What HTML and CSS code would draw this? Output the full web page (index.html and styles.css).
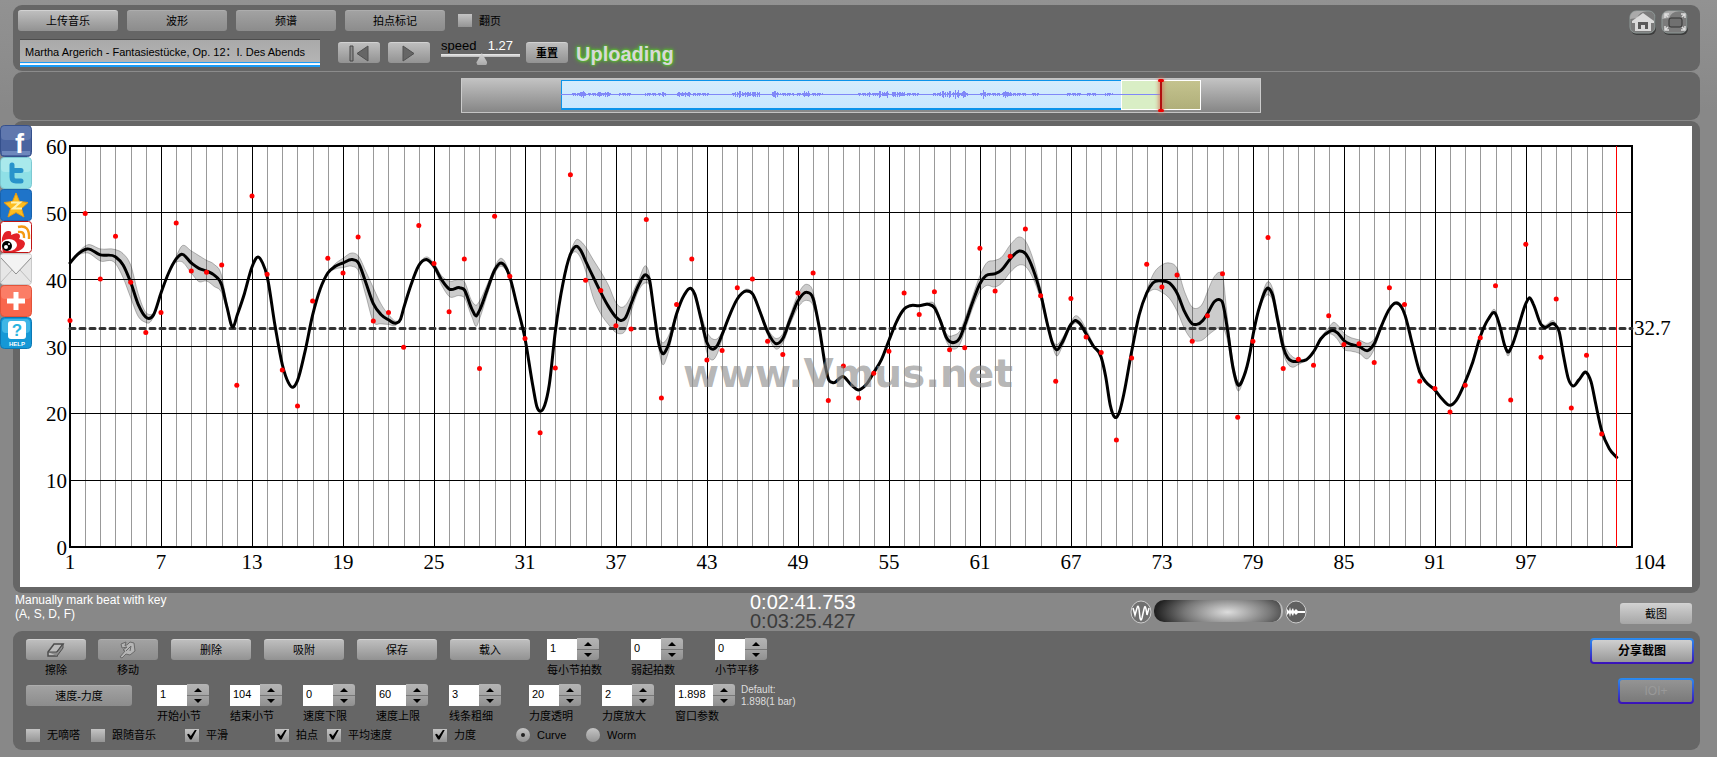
FILE: index.html
```html
<!DOCTYPE html>
<html lang="zh-CN">
	<head>
		<meta charset="utf-8">
		<title>Vmus.net</title>
		<link rel="stylesheet" href="styles.css">
	</head>
	<body>
		<!-- 左侧分享按钮 -->
		<nav class="share">
			<a href="#" aria-label="Facebook">
				<svg viewBox="0 0 32 32">
					<rect x="0.5" y="0.5" width="31" height="31" rx="4" fill="#4a64a0" stroke="#35508c"/>
					<rect x="1" y="1" width="30" height="14" rx="4" fill="#6078ae"/>
					<rect x="2" y="26" width="28" height="4" fill="#6e88bd"/>
					<text x="15" y="28" font-size="27" class="logo">f</text>
				</svg>
			</a>
			<a href="#" aria-label="Twitter">
				<svg viewBox="0 0 32 32">
					<rect x="0.5" y="0.5" width="31" height="31" rx="4" fill="#8fe0e6" stroke="#7cc9d2"/>
					<rect x="1" y="1" width="30" height="14" rx="4" fill="#a9e9ec"/>
					<path d="M12 8V20Q12 24 16 24H21M12 13.500H21" fill="none" stroke="#2893cb" stroke-width="5" stroke-linecap="round"/>
				</svg>
			</a>
			<a href="#" aria-label="QQ空间">
				<svg viewBox="0 0 32 32">
					<rect x="0.500" y="0.500" width="31" height="31" rx="3" fill="#1f74c9" stroke="#1862ad"/>
					<path d="M16 4L19.500 12.500L28 13.500L21.500 19.500L24 28L16 23.500L8 28L10.500 19.500L4 13.500L12.500 12.500Z" fill="#fdbd1f" stroke="#e89a10"/>
					<path d="M11 13.500H20L13 19.500H22" fill="none" stroke="#fff3b0" stroke-width="2"/>
				</svg>
			</a>
			<a href="#" aria-label="新浪微博">
				<svg viewBox="0 0 32 32">
					<rect x="0.500" y="0.500" width="31" height="31" rx="3" fill="#fff" stroke="#c01414"/>
					<path d="M2 17Q4 9 9 10Q12 10 11 14Q19 10 20 15Q20 17 19 18Q25 19 25 23Q24 29 15 31H3Q1 26 2 17Z" fill="#e32228"/>
					<ellipse cx="9" cy="24" rx="8" ry="6" fill="#fff"/>
					<circle cx="7" cy="25" r="5" fill="#000"/>
					<circle cx="6" cy="26" r="2" fill="#fff"/>
					<circle cx="9" cy="23" r="1" fill="#fff"/>
					<path d="M18 6Q30 3 29 18M18 11Q25 10 24 17" fill="none" stroke="#f49a12" stroke-width="2.500"/>
				</svg>
			</a>
			<a href="#" aria-label="邮件">
				<svg viewBox="0 0 32 32">
					<rect x="0.500" y="0.500" width="31" height="31" rx="3" fill="#e6e6e6" stroke="#c9c9c9"/>
					<path d="M1 29L12 17M31 29L20 17" stroke="#bdbdbd" fill="none"/>
					<path d="M1 4L16 21L31 4V2H1Z" fill="#f3f3f3"/>
					<path d="M1 5L16 21L31 5" fill="none" stroke="#8f8f8f"/>
				</svg>
			</a>
			<a href="#" aria-label="更多">
				<svg viewBox="0 0 32 32">
					<rect x="0.500" y="0.500" width="31" height="31" rx="4" fill="#f9664c" stroke="#e2533a"/>
					<rect x="1" y="1" width="30" height="13" rx="4" fill="#fb7d66"/>
					<path d="M16 7V25M7 16H25" stroke="#fff" stroke-width="5"/>
				</svg>
			</a>
			<a href="#" aria-label="帮助">
				<svg viewBox="0 0 32 32">
					<rect x="0.500" y="0.500" width="31" height="31" rx="4" fill="#1598d6" stroke="#0c78b4"/>
					<rect x="2" y="2" width="28" height="14" rx="4" fill="#3fb6e6"/>
					<rect x="8" y="4" width="18" height="18" rx="3" fill="#fff"/>
					<text x="17" y="19" font-size="17" text-anchor="middle" class="logo logo_q">?</text>
					<text x="17" y="29" font-size="6" text-anchor="middle" class="logo">HELP</text>
				</svg>
			</a>
		</nav>

		<!-- 顶部工具栏 -->
		<div class="panel top">
			<div class="top_left">
				<div class="top_row">
					<button type="button" class="btn btn_wide">上传音乐</button>
					<button type="button" class="btn btn_wide btn_off">波形</button>
					<button type="button" class="btn btn_wide btn_off">频谱</button>
					<button type="button" class="btn btn_wide btn_off">拍点标记</button>
					<label class="check"><input type="checkbox">翻页</label>
				</div>
				<div class="top_row player">
					<input type="text" class="song" aria-label="曲目" value="Martha Argerich - Fantasiestücke, Op. 12：I. Des Abends">
					<div class="player_btns">
						<button type="button" class="btn btn_icon" aria-label="回到开头">
							<svg width="24" height="17" viewBox="0 0 24 17"><path d="M3 1H6V16H3Z" fill="#8c8c8c" stroke="#444"/><path d="M21 1V16L10 8.500Z" fill="#666" stroke="#505050"/></svg>
						</button>
						<button type="button" class="btn btn_icon" aria-label="播放">
							<svg width="24" height="17" viewBox="0 0 24 17"><path d="M6 1V16L17 8.500Z" fill="#666" stroke="#505050"/></svg>
						</button>
					</div>
					<div class="speed">
						<div class="speed_hd"><label for="speed">speed</label><output for="speed">1.27</output></div>
						<input type="range" id="speed" min="0" max="100" value="52">
					</div>
					<button type="button" class="btn btn_icon btn_bold">重置</button>
					<span class="uploading">Uploading</span>
				</div>
			</div>
			<div class="top_right">
				<a href="#" aria-label="首页">
					<svg width="28" height="26" viewBox="0 0 28 26">
						<rect x="2" y="3" width="25" height="22" rx="6" fill="#3c3c3c"/>
						<rect x="1" y="1" width="25" height="22" rx="6" fill="#7b7b7b" stroke="#8f9a98"/>
						<path d="M1 9Q1 1 8 1H18Q10 2 8 8Z" fill="#aaa"/>
						<path d="M14 3L25 11V13H22V21H6V13H3V11Z" fill="#dadada"/>
						<path d="M9 19V12H19V19H16V15H12V19Z" fill="#5a5a5a"/>
					</svg>
				</a>
				<a href="#" aria-label="全屏">
					<svg width="28" height="26" viewBox="0 0 28 26">
						<rect x="2" y="3" width="25" height="22" rx="6" fill="#3c3c3c"/>
						<rect x="1" y="1" width="25" height="22" rx="6" fill="#7b7b7b" stroke="#8f9a98"/>
						<path d="M1 9Q1 1 8 1H18Q10 2 8 8Z" fill="#aaa"/>
						<rect x="8" y="8" width="13" height="9" rx="2" fill="#707070" stroke="#333"/>
						<path d="M4 8V4H8M4 4L7 7M20 4H24V8M24 4L21 7M4 16V20H8M4 20L7 17M20 20H24V16M24 20L21 17" fill="none" stroke="#ddd" stroke-width="1.500"/>
					</svg>
				</a>
			</div>
		</div>

		<!-- 缩略波形 -->
		<div class="panel overview">
			<div class="track">
				<div class="track_view"></div>
				<div class="track_sel"></div>
				<svg class="wave" viewBox="0 0 600 32" preserveAspectRatio="none"><path id="wave"/></svg>
				<i class="cursor"></i>
			</div>
		</div>

		<!-- 速度曲线 -->
		<div class="panel chart">
			<svg id="chart" viewBox="0 0 1672 461" role="img" aria-label="速度-力度曲线"></svg>
		</div>

		<div class="status">
			<p class="hint">Manually mark beat with key<br>(A, S, D, F)</p>
			<div class="time"><span>0:02:41.753</span><span class="total">0:03:25.427</span></div>
			<div class="zoom">
				<svg width="22" height="24" viewBox="0 0 22 24"><ellipse cx="11" cy="12" rx="10" ry="11" fill="#707070" stroke="#ccc"/><path d="M3 8L5 15L7 8Q8 4 9 9L10 18Q11 22 12 18L14 9Q15 4 16 9L17 15L19 8" fill="none" stroke="#fff" stroke-width="1.500"/></svg>
				<input type="range" aria-label="缩放">
				<svg width="22" height="24" viewBox="0 0 22 24"><ellipse cx="11" cy="12" rx="10" ry="11" fill="#606060" stroke="#ccc"/><path d="M2 9L4 11L5 7L6 11L8 8L9 11L11 9L13 11L20 11V13L13 13L11 15L9 13L8 16L6 13L5 17L4 13L2 15Z" fill="#fff"/></svg>
			</div>
			<button type="button" class="btn btn_shot">截图</button>
		</div>

		<!-- 底部设置 -->
		<div class="panel bottom">
			<div class="settings">
				<div class="row">
					<div class="tools">
						<div class="tool">
							<button type="button" class="btn" id="erase"><svg width="18" height="16" viewBox="0 0 18 16"><path d="M1 10L7 2H16L10 10V14H1Z" fill="#bbb" stroke="#4c4c4c" stroke-width="1.500"/><path d="M1 10H10L16 2V6L10 14" fill="#8a8a8a" stroke="#4c4c4c"/></svg></button>
							<label for="erase">擦除</label>
						</div>
						<div class="tool">
							<button type="button" class="btn btn_off" id="move"><svg width="18" height="18" viewBox="0 0 18 18"><path d="M2 3L7 1L6 5L9 3L11 1L15 2L16 10L11 14L7 13L3 17L1 16L6 10L4 9L8 6L3 7Z" fill="#b5b5b5" stroke="#6a6a6a"/><path d="M7 10L12 5L11 10" fill="none" stroke="#6a6a6a"/></svg></button>
							<label for="move">移动</label>
						</div>
					</div>
					<div class="tools">
						<button type="button" class="btn btn_mid">删除</button>
						<button type="button" class="btn btn_mid">吸附</button>
						<button type="button" class="btn btn_mid">保存</button>
						<button type="button" class="btn btn_mid">载入</button>
					</div>
					<div class="spins spins_far">
						<div class="spin"><input type="text" id="n1" value="1"><span class="arrows"><button type="button" aria-label="加"></button><button type="button" aria-label="减"></button></span><label for="n1">每小节拍数</label></div>
						<div class="spin"><input type="text" id="n2" value="0"><span class="arrows"><button type="button" aria-label="加"></button><button type="button" aria-label="减"></button></span><label for="n2">弱起拍数</label></div>
						<div class="spin"><input type="text" id="n3" value="0"><span class="arrows"><button type="button" aria-label="加"></button><button type="button" aria-label="减"></button></span><label for="n3">小节平移</label></div>
					</div>
				</div>
				<div class="row row_2">
					<button type="button" class="btn btn_mode">速度-力度</button>
					<div class="spins">
						<div class="spin"><input type="text" id="n4" value="1"><span class="arrows"><button type="button" aria-label="加"></button><button type="button" aria-label="减"></button></span><label for="n4">开始小节</label></div>
						<div class="spin"><input type="text" id="n5" value="104"><span class="arrows"><button type="button" aria-label="加"></button><button type="button" aria-label="减"></button></span><label for="n5">结束小节</label></div>
						<div class="spin"><input type="text" id="n6" value="0"><span class="arrows"><button type="button" aria-label="加"></button><button type="button" aria-label="减"></button></span><label for="n6">速度下限</label></div>
						<div class="spin"><input type="text" id="n7" value="60"><span class="arrows"><button type="button" aria-label="加"></button><button type="button" aria-label="减"></button></span><label for="n7">速度上限</label></div>
						<div class="spin"><input type="text" id="n8" value="3"><span class="arrows"><button type="button" aria-label="加"></button><button type="button" aria-label="减"></button></span><label for="n8">线条粗细</label></div>
					</div>
					<div class="spins">
						<div class="spin"><input type="text" id="n9" value="20"><span class="arrows"><button type="button" aria-label="加"></button><button type="button" aria-label="减"></button></span><label for="n9">力度透明</label></div>
						<div class="spin"><input type="text" id="n10" value="2"><span class="arrows"><button type="button" aria-label="加"></button><button type="button" aria-label="减"></button></span><label for="n10">力度放大</label></div>
						<div class="spin spin_wide"><input type="text" id="n11" value="1.898"><span class="arrows"><button type="button" aria-label="加"></button><button type="button" aria-label="减"></button></span><label for="n11">窗口参数</label></div>
					</div>
					<p class="default">Default:<br>1.898(1 bar)</p>
				</div>
				<div class="options">
					<label class="check"><input type="checkbox">无嘀嗒</label>
					<label class="check"><input type="checkbox">跟随音乐</label>
					<label class="check"><input type="checkbox" checked>平滑</label>
					<label class="check"><input type="checkbox" checked>拍点</label>
					<label class="check"><input type="checkbox" checked>平均速度</label>
					<label class="check"><input type="checkbox" checked>力度</label>
					<label class="check"><input type="radio" name="type" checked>Curve</label>
					<label class="check"><input type="radio" name="type">Worm</label>
				</div>
			</div>
			<div class="export">
				<button type="button" class="btn btn_blue btn_share">分享截图</button>
				<button type="button" class="btn btn_blue btn_ioi" disabled>IOI+</button>
			</div>
		</div>
		<script src="chart.js"></script>
	</body>
</html>
```

FILE: styles.css
```css
*{
	margin: 0;
	padding: 0;
	box-sizing: border-box;
}
body{
	padding: 5px 17px 7px 13px;
	background: #888 linear-gradient(#929292, #888 110px) no-repeat;
	font-family: "Liberation Sans", "Noto Sans CJK SC", sans-serif;
	font-size: 11px;
	color: #000;
}
svg{
	display: block;
}
.panel{
	margin-bottom: 1px;
	border-radius: 9px;
	background-color: #666;
}

/* 按钮 */
.btn{
	display: flex;
	align-items: center;
	justify-content: center;
	width: 60px;
	height: 21px;
	border: 0;
	border-top: 1px solid #d2d2d2;
	border-radius: 3px;
	background: linear-gradient(#bebebe, #929292);
	font-family: inherit;
	font-size: 11px;
	line-height: 16px;
	color: #000;
}
.btn_off,.btn_mode{
	border-top-color: #adadad;
	background: linear-gradient(#a2a2a2, #8c8c8c);
}
.btn_wide{
	width: 100px;
}
.btn_mid{
	width: 80px;
}
.btn_icon{
	width: 42px;
}
.btn_bold{
	font-weight: bold;
}
.btn_mode{
	width: 106px;
}

/* 复选框 单选框 */
.check{
	display: flex;
	align-items: center;
	gap: 7px;
	line-height: 16px;
	white-space: nowrap;
}
.check input{
	position: relative;
	appearance: none;
	width: 14px;
	height: 13px;
	background: linear-gradient(#c4c4c4, #949494);
}
.check input[type="radio"]{
	height: 14px;
	border-radius: 7px;
}
.check input[type="checkbox"]:checked::after{
	content: "";
	position: absolute;
	top: 1px;
	left: 2px;
	width: 10px;
	height: 10px;
	background-color: #000;
	clip-path: polygon(0 50%, 18% 42%, 38% 66%, 82% 0, 100% 0, 46% 100%, 30% 100%);
}
.check input[type="radio"]:checked::after{
	content: "";
	position: absolute;
	top: 5px;
	left: 5px;
	width: 4px;
	height: 4px;
	border-radius: 2px;
	background-color: #222;
}

/* 左侧分享 */
.share{
	position: absolute;
	top: 125px;
	left: 0;
	width: 32px;
}
.share a{
	display: block;
}
.share svg{
	width: 32px;
	height: 32px;
}
.logo{
	font-family: "Liberation Sans", sans-serif;
	font-weight: bold;
	fill: #fff;
}
.logo_q{
	fill: #28b4e0;
}

/* 顶部 */
.top{
	display: flex;
	justify-content: space-between;
	padding: 5px 11px 4px 5px;
}
.top_row{
	display: flex;
	align-items: center;
	gap: 9px;
}
.top_row .check{
	margin-left: 4px;
}
.player{
	align-items: flex-start;
	gap: 6px;
	padding: 8px 0 0 2px;
}
.song{
	width: 300px;
	height: 28px;
	padding: 0 5px 4px;
	border: 0;
	border-top: 1px solid #4d4d4d;
	border-bottom: 2px solid #1a9bf5;
	background: linear-gradient(#a9a9a9, #b6b6b6);
	box-shadow: inset 0 -1px #fff, inset 0 -2px #e8f4ff, inset 0 -3px #1a9bf5;
	font-family: inherit;
	font-size: 11px;
}
.player_btns{
	display: flex;
	gap: 8px;
	padding: 0 5px 0 12px;
}
.player .btn,.uploading{
	margin-top: 3px;
}
.speed{
	width: 79px;
}
.speed_hd{
	display: flex;
	justify-content: space-between;
	padding-right: 7px;
	font-size: 13px;
	line-height: 14px;
}
.speed_hd output{
	color: #fff;
}
.speed input{
	display: block;
	appearance: none;
	width: 79px;
	height: 12px;
	background: linear-gradient(#eee, #bbb) 0 1px / 100% 3px no-repeat;
}
.speed input::-webkit-slider-thumb{
	appearance: none;
	width: 11px;
	height: 12px;
	background: linear-gradient(#d5d5d5, #aaa);
	clip-path: polygon(50% 0, 100% 80%, 90% 100%, 10% 100%, 0 80%);
}
.uploading{
	padding-left: 2px;
	font-size: 20px;
	font-weight: bold;
	line-height: 24px;
	color: #d8d8d8;
	text-shadow: 0 0 2px #5c2, 0 0 3px #5c2, 0 0 5px #5c2;
}
.top_right{
	display: flex;
	gap: 4px;
}

/* 缩略波形 */
.overview{
	padding: 6px 0 7px 9px;
}
.track{
	display: flex;
	position: relative;
	width: 800px;
	height: 35px;
	margin: 0 auto;
	padding: 1px 0 2px 100px;
	border-top: 1px solid #c4c4c4;
	border-bottom: 1px solid #c4c4c4;
	background: linear-gradient(#c2c2c2, #868686);
	box-shadow: inset 1px 0 #ccc, inset -1px 0 #ccc;
}
.track_view{
	width: 560px;
	border: 1px solid #0c93ea;
	border-right: 0;
	border-bottom-width: 2px;
	background: linear-gradient(#d5ecfc, #c8e7ff);
}
.track_sel{
	width: 80px;
	border: 1px solid #fff;
	background: linear-gradient(90deg, #d9eec5 39px, rgba(200, 198, 110, .6) 39px);
}
.wave{
	position: absolute;
	top: 0;
	left: 100px;
	width: 600px;
	height: 32px;
}
.wave path{
	fill: none;
	stroke: #8088f8;
	shape-rendering: crispEdges;
}
.cursor{
	position: absolute;
	top: 0;
	left: 699px;
	width: 2px;
	height: 33px;
	background-color: #b01010;
	box-shadow: 0 0 4px 1px #d8735a;
}
.cursor::before,.cursor::after{
	content: "";
	position: absolute;
	left: -2px;
	width: 6px;
	height: 3px;
	border-radius: 2px;
	background-color: #e00;
}
.cursor::before{
	top: 0;
}
.cursor::after{
	bottom: 0;
}

/* 曲线图 */
.chart{
	margin: 0;
	padding: 5px 8px 6px 7px;
}
.chart svg{
	width: 100%;
	height: auto;
	background-color: #fff;
}
.grid{
	fill: none;
	stroke: #000;
	shape-rendering: crispEdges;
}
.grid_minor{
	stroke: #999;
}
.grid_box{
	stroke-width: 2;
}
.num{
	font-family: "Liberation Serif", serif;
	font-size: 21px;
}
.num_y{
	text-anchor: end;
}
.num_x{
	text-anchor: middle;
}
.band{
	fill: #000;
	fill-opacity: .2;
	stroke: #000;
	stroke-opacity: .25;
}
.line{
	fill: none;
	stroke: #000;
	stroke-width: 3;
	stroke-linecap: round;
}
.average{
	stroke: #333;
	stroke-width: 3;
	stroke-linecap: round;
	stroke-dasharray: 5 5;
}
.now{
	stroke: #f00;
	shape-rendering: crispEdges;
}
.dot{
	fill: #f00;
}
.watermark{
	font-family: "DejaVu Sans", sans-serif;
	font-size: 39px;
	font-weight: bold;
	fill: #8c8c8c;
	fill-opacity: .65;
}

/* 状态栏 */
.status{
	display: grid;
	grid-template-columns: 737px 1fr auto auto;
	height: 38px;
	padding: 0 8px 0 0;
}
.hint{
	padding: 0 2px;
	font-size: 12px;
	line-height: 14px;
	color: #fff;
}
.time{
	font-size: 20px;
	line-height: 19px;
	color: #fff;
}
.time span{
	display: block;
}
.time .total{
	color: #3c3c3c;
}
.zoom{
	display: flex;
	gap: 2px;
	margin: 7px 313px 0 0;
}
.zoom input{
	appearance: none;
	width: 129px;
	height: 22px;
	border-right: 2px solid #bbb;
	border-radius: 10px;
	background: radial-gradient(ellipse 72px 26px at 58% 55%, #ddd, #777 60%, #222);
}
.zoom input::-webkit-slider-thumb{
	appearance: none;
	width: 10px;
	height: 20px;
}
.btn_shot{
	width: 72px;
	margin-top: 10px;
	background: linear-gradient(#d0d0d0, #a6a6a6);
}

/* 底部设置 */
.bottom{
	display: flex;
	justify-content: space-between;
	min-height: 119px;
	margin: 0;
	padding: 7px 6px 0 13px;
}
.row{
	display: flex;
	height: 46px;
}
.row label{
	display: block;
	line-height: 16px;
	white-space: nowrap;
}
.tools{
	display: flex;
	align-items: flex-start;
	gap: 12px;
	margin: 1px 13px 0 0;
}
.tools + .tools{
	gap: 13px;
	margin-right: 12px;
}
.tool label{
	margin-top: 2px;
	text-align: center;
}
.spins{
	display: flex;
	gap: 21px;
	margin-left: 28px;
}
.spins_far{
	gap: 32px;
	margin-left: 5px;
}
.row_2 .btn{
	margin-top: 1px;
}
.row_2 .spins:first-of-type{
	margin-left: 25px;
}
.spin{
	display: flex;
	flex-wrap: wrap;
	align-content: flex-start;
	align-items: flex-end;
	width: 52px;
}
.spin input{
	width: 30px;
	height: 21px;
	padding: 0 0 4px 3px;
	border: 0;
	background-color: #fff;
	font-family: inherit;
	font-size: 11px;
}
.spin_wide{
	width: 60px;
}
.spin_wide input{
	width: 38px;
}
.spin label{
	margin-top: 2px;
}
.arrows button{
	display: block;
	width: 22px;
	height: 11px;
	border: 0;
	border-radius: 0 3px 0 0;
	background: linear-gradient(#b4b4b4, #a6a6a6);
}
.arrows button::before{
	content: "";
	display: block;
	width: 0;
	margin: 0 auto;
	border: 4px solid transparent;
	border-top: 0;
	border-bottom-color: #000;
}
.arrows button + button{
	border-top: 1px solid #777;
	border-radius: 0 0 3px 0;
	background: linear-gradient(#a2a2a2, #909090);
}
.arrows button + button::before{
	border-top: 4px solid #000;
	border-bottom: 0;
}
.default{
	margin-left: 6px;
	font-size: 10px;
	line-height: 12px;
	color: #ddd;
}
.options{
	display: grid;
	grid-template-columns: 65px 94px 90px 52px 106px 83px 70px auto;
	margin-top: -3px;
}
.export{
	display: flex;
	flex-direction: column;
	align-items: flex-end;
	gap: 14px;
}
.btn_blue{
	width: 104px;
	height: 26px;
	border: 2px solid transparent;
	border-radius: 4px;
	background: linear-gradient(#d0d0d0, #999) padding-box, linear-gradient(#2a8cf0, #3a10b8) border-box;
	font-size: 12px;
	font-weight: bold;
}
.btn_ioi{
	width: 76px;
	background: linear-gradient(#949494, #7a7a7a) padding-box, linear-gradient(#2a8cf0, #3a10b8) border-box;
	font-weight: normal;
	color: #999;
}
```

FILE: chart.js
```js
var chart = document.querySelector('#chart');
var LEFT = 50, RIGHT = 1612, TOP = 20, BOTTOM = 421;

// 每一拍的速度
var beats = [33.9,49.9,40.1,46.5,39.6,32.1,35.1,48.5,41.3,41.1,42.2,24.2,52.5,40.8,26.5,21.1,36.8,43.2,41,46.4,
	33.8,35.1,29.9,48.1,42.4,35.2,43.1,26.7,49.5,40.5,31.2,17.1,26.8,55.7,39.9,38.4,33.1,32.6,49,22.3,
	36.3,43.1,28,29.4,38.8,40.1,30.8,28.8,38,41,21.9,27.1,22.3,26,29.3,38,34.8,38.2,29.5,29.8,
	44.7,38.3,43.5,47.6,37.6,24.8,37.2,31.4,29.1,16,28.3,42.3,38.9,40.7,30.8,34.6,40.9,19.4,30.8,46.3,
	26.7,28.1,27.2,34.6,30.3,30.4,27.6,38.8,36.3,24.8,23.7,20.2,24.2,31.3,39.1,22,45.3,28.4,37.1,20.8,28.7,16.9];

// 平滑曲线 [拍, 速度, 力度上, 力度下]
var curve = [
	[1,42.5,0,0],[1.5,43.8,.2,.2],[2.14,44.6,.6,.6],[3,43.7,.9,.9],[4,43.4,1.1,1],[4.5,42.2,1.7,1.9],[5,39.6,2.6,2.3],[5.5,36.3,1.6,1.8],
	[6,34.4,.7,.8],[6.2,34.2,.6,.7],[6.5,34.7,.3,.3],[7,38,0,0],[7.5,41,0,0],[8,43.1,.4,.5],[8.35,43.8,1.2,1.1],[9,42.5,1.8,1.5],[9.5,41.7,1.9,2],
	[10,41.3,1.6,1.5],[10.5,40.7,1.6,1.7],[11,39.2,1.4,1.2],[11.35,35.9,.5,.5],[11.75,32.9,.3,.3],[12,34.5,0,0],[12.5,37.9,0,0],[13,41.9,0,0],
	[13.4,43.4,0,0],[13.7,42.5,0,0],[14,40.5,0,0],[14.5,33.4,0,0],[15,27.3,0,0],[15.4,24.6,0,0],[15.7,23.9,0,0],[16,24.9,0,0],[16.5,29.3,0,0],
	[17,34.7,0,0],[17.5,38.6,0,0],[18,41,.1,.1],[18.5,42,.4,.4],[19,42.5,.7,.7],[19.6,43,1,1],[20,42.6,1,1.2],[20.5,39.6,1.7,1.9],[21,36.4,2.4,2.7],
	[21.5,34.8,1.6,1.4],[22,34,.8,.7],[22.5,33.5,.3,.3],[22.8,34.1,0,0],[23,35.7,0,0],[23.5,39.3,0,0],[24,42.1,.2,.2],[24.5,43,.4,.2],[25,42,.5,.4],
	[25.5,40,.6,.8],[26,38.6,1.2,1.1],[26.7,38.8,1.2,1.2],[27,38.5,1.2,1.2],[27.5,35.6,1.2,1.2],[27.8,34.6,1.6,1.6],[28,35.4,1.4,1.3],[28.5,38.4,.8,.8],
	[29,41.4,.5,.5],[29.4,42.5,.7,.5],[29.7,42,.6,.4],[30,40.4,.3,.2],[30.5,35.9,0,0],[31,31.2,0,0],[31.5,24.4,0,0],[31.8,20.9,0,0],[32,20.3,0,0],
	[32.3,21.2,0,0],[32.6,24.2,0,0],[33,32.2,0,0],[33.5,39.4,0,0],[34,43.8,.3,.3],[34.4,45,1,.9],[34.7,44.3,1.4,1.2],[35,42.8,2.1,1.5],[35.5,40.4,2.6,3.1],
	[36,38.1,3.1,3.2],[36.5,36,3.2,2.7],[37,34.4,2.2,2.3],[37.3,33.9,2,2],[37.6,34.2,1.9,1.9],[38,36.4,1.2,1.2],[38.5,39.2,.8,.8],[39,40.7,1.3,1.2],
	[39.2,40.1,.8,.9],[39.5,35.4,.3,.3],[39.8,30.7,.9,.7],[40.05,29,1.6,1.6],[40.4,29.9,1.4,1.2],[41,34.9,.2,.2],[41.5,37.7,0,0],[42,38.6,.2,.2],
	[42.2,37.8,.4,.1],[42.6,34.2,.8,.4],[43,30.6,1.6,1.5],[43.4,29.6,1.5,1.6],[43.7,30.2,1,1.2],[44,31.8,.4,.7],[44.5,34.7,.1,.1],[45,37.1,0,0],
	[45.6,38.3,.3,.1],[46,37.9,.2,.2],[46.5,35.2,.3,.3],[47,32.2,.5,.5],[47.6,30.4,.8,.8],[48,31.2,.7,.7],[48.5,34.1,.7,.7],[49,36.8,1,1],
	[49.6,38.1,1.2,1.2],[50,37.2,1,1.1],[50.4,32.9,.3,.3],[50.8,27.2,0,0],[51,25.2,0,0],[51.3,24.6,0,0],[52,25.5,0,0],[52.5,24.3,0,0],[53,23.5,0,0],
	[53.5,24.3,0,0],[54,26.1,0,0],[54.5,28,0,0],[55,30.9,0,0],[55.5,33.7,0,0],[56,35.6,0,0],[56.4,36.1,0,0],[57,36.1,0,0],[57.6,36.3,.3,0],[58,35.8,.6,.3],
	[58.4,33.8,.4,.4],[58.8,31.3,.6,.6],[59.3,30.6,1.1,1],[59.7,31.4,1,1],[60,33.2,.9,.9],[60.5,36.5,.9,.9],[61,39.4,1.2,1.2],[61.4,40.6,1.8,1.5],
	[62,40.9,2,2],[62.4,41.4,1.9,2],[63,43.1,2.1,2],[63.6,44.3,2.1,2.1],[64,43.9,1.9,1.9],[64.5,41.6,1.5,1.4],[65,37.9,.8,.8],[65.5,32.9,.4,.4],
	[65.8,30.4,.5,.5],[66.05,29.5,.8,.9],[66.4,30.5,.6,.7],[67,33.3,.4,.4],[67.3,33.9,.7,.4],[67.6,33.4,.8,.3],[68,31.9,.7,.3],[68.5,30,.3,.1],
	[69,28.4,0,0],[69.3,25.4,0,0],[69.6,21.2,0,0],[69.9,19.4,0,0],[70.2,20.2,0,0],[70.5,23,0,0],[71,29.2,0,0],[71.5,34.7,0,0],[72,38,.4,.3],
	[72.4,39.5,1.2,1],[73,39.8,2.4,1.7],[73.5,39.5,3,2.3],[74,38,3.7,2.7],[74.5,35.2,3,2.6],[75,33.4,2.5,2.4],[75.3,33.3,2.4,2.5],[75.7,33.9,2.6,2.9],
	[76,34.9,3.3,3.3],[76.5,36.8,3.8,4.3],[76.8,37,4.1,4.1],[77,36.6,4.2,3.7],[77.3,32.9,1.8,1.8],[77.7,26.7,.8,.8],[78,24.3,.5,.9],[78.4,25.5,.2,.3],
	[78.8,28.9,0,0],[79,31.6,0,0],[79.5,36.4,.4,.4],[80.05,38.7,1,1],[80.3,37.7,1,.8],[80.6,34.4,1,.8],[81,29.9,1,.9],[81.3,28.3,1,.9],[81.6,27.8,.7,.9],
	[82,27.8,.3,.5],[82.5,28,0,0],[83,29.2,0,0],[83.5,31.2,.2,.2],[84,32.2,.6,.3],[84.3,32.4,1.2,.7],[84.6,32,1.2,1],[85,30.9,1.1,1.3],[85.5,30.3,1,1],
	[86,30,1,1],[86.6,29.4,1.1,1.2],[87,30.4,.7,.8],[87.5,33.2,.1,.1],[88,35.6,0,0],[88.4,36.5,.2,.2],[88.8,35.9,.2,.2],[89,34.9,0,0],[89.5,30.5,0,0],
	[90,26.2,0,0],[90.4,24.7,0,0],[91,23.5,0,0],[91.5,22.1,0,0],[92,21.2,0,0],[92.4,21.9,0,0],[93,24.7,0,0],[93.5,27.7,0,0],[94,31.5,0,0],[94.5,34,.2,.1],
	[95,34.9,.5,.1],[95.3,32.9,.2,.2],[95.6,30.2,.2,.2],[95.8,29.2,.3,.6],[96.1,30.2,.1,.1],[96.5,32.9,0,0],[97,36.4,0,0],[97.25,37.3,0,0],[97.5,36.3,0,0],
	[98,33.3,.2,.2],[98.2,32.9,.3,.2],[98.9,33.3,.4,.1],[99.2,32.2,.1,.1],[99.5,28.4,0,0],[99.8,25.2,0,0],[100.1,24.1,0,0],[100.5,25,0,0],[101,26.1,0,0],
	[101.3,24.7,0,0],[101.6,21.5,0,0],[102,17.4,0,0],[102.5,14.7,0,0],[103,13.4,0,0]
];

function px(beat){
	return LEFT + (beat - 1) * (RIGHT - LEFT) / 103;
}
function py(value){
	return BOTTOM - value * (BOTTOM - TOP) / 60;
}
function add(tag, attrs, text){
	var el = document.createElementNS('http://www.w3.org/2000/svg', tag);
	for(var k in attrs){
		el.setAttribute(k, attrs[k]);
	}
	if(text !== undefined){
		el.textContent = text;
	}
	chart.appendChild(el);
}
// 过所有点的平滑路径
function smooth(pts){
	var m = [];
	for(var i = 0; i < pts.length; i++){
		var a = pts[i - 1], b = pts[i], c = pts[i + 1];
		if(!a || !c){
			m.push(a ? (b[1] - a[1]) / (b[0] - a[0]) : (c[1] - b[1]) / (c[0] - b[0]));
			continue;
		}
		var h0 = b[0] - a[0], h1 = c[0] - b[0];
		var s0 = (b[1] - a[1]) / h0, s1 = (c[1] - b[1]) / h1;
		m.push((s0 * h1 + s1 * h0) / (h0 + h1));
	}
	var d = pts[0][0].toFixed(1) + ' ' + pts[0][1].toFixed(1);
	for(i = 1; i < pts.length; i++){
		var p = pts[i - 1], q = pts[i], h = (q[0] - p[0]) / 3;
		d += 'C' + [p[0] + h, p[1] + h * m[i - 1], q[0] - h, q[1] - h * m[i], q[0], q[1]].map(function(n){
			return n.toFixed(1);
		}).join(' ');
	}
	return d;
}

// 网格 最后一拍由红线表示
var i, minor = '', major = '';
for(i = 2; i < 103; i++){
	var v = 'M' + (Math.round(px(i)) + .5) + ' ' + TOP + 'V' + BOTTOM;
	if(i % 6 == 1){
		major += v;
	}else{
		minor += v;
	}
}
for(i = 10; i < 60; i += 10){
	major += 'M' + LEFT + ' ' + (Math.floor(py(i)) + .5) + 'H' + RIGHT;
}
add('path', {'class': 'grid grid_minor', d: minor});
add('path', {'class': 'grid', d: major});
add('rect', {'class': 'grid grid_box', x: LEFT, y: TOP, width: RIGHT - LEFT, height: BOTTOM - TOP});

// 坐标数字
for(i = 0; i <= 60; i += 10){
	add('text', {'class': 'num num_y', x: LEFT - 3, y: Math.round(py(i)) + 8}, i);
}
for(i = 1; i < 100; i += 6){
	add('text', {'class': 'num num_x', x: Math.round(px(i)), y: BOTTOM + 22}, i);
}
add('text', {'class': 'num', x: RIGHT + 2, y: BOTTOM + 22}, 104);

// 力度带 曲线 平均速度
var up = curve.map(function(p){ return [px(p[0]), py(p[1] + p[2])]; });
var down = curve.map(function(p){ return [px(p[0]), py(p[1] - p[3])]; }).reverse();
add('path', {'class': 'band', d: 'M' + smooth(up) + 'L' + smooth(down) + 'Z'});
add('line', {'class': 'average', x1: LEFT, x2: RIGHT, y1: 202.5, y2: 202.5});
add('path', {'class': 'line', d: 'M' + smooth(curve.map(function(p){ return [px(p[0]), py(p[1])]; }))});
add('text', {'class': 'num', x: RIGHT + 2, y: 209}, '32.7');
add('line', {'class': 'now', x1: 1596.5, x2: 1596.5, y1: TOP, y2: BOTTOM});
beats.forEach(function(b, n){
	add('circle', {'class': 'dot', cx: px(n + 1).toFixed(1), cy: py(b).toFixed(1), r: 2.5});
});
add('text', {'class': 'watermark', x: 663, y: 261}, 'www.Vmus.net');

// 缩略波形 [起点, 长度, 振幅]
var bursts = [[10,8,1],[18,8,3],[27,8,1],[34,16,2],[58,12,1],[84,12,1],[97,8,3],[116,14,2],[132,16,1],[170,5,2],[175,8,4],[183,16,2],[210,8,3],[219,14,1],
	[236,8,1],[243,6,3],[250,12,1],[297,8,1],[306,12,2],[318,10,3],[330,14,2],[346,12,1],[372,6,1],[378,12,4],[391,8,5],[399,8,3],[419,6,5],[425,14,1],
	[441,10,3],[452,14,1],[470,8,1],[506,14,1],[525,10,1],[544,8,1]];
var wave = 'M0 15.5H600';
bursts.forEach(function(b){
	for(var x = b[0]; x < b[0] + b[1]; x++){
		var a = (x * x + b[0]) % 7 % b[2] + (x * x % 5 > 0 ? 1 : 0);
		wave += 'M' + (x + .5) + ' ' + (15 - Math.min(a, b[2])) + 'V' + (16 + Math.min(a, b[2]) - (x % 2));
	}
});
document.querySelector('#wave').setAttribute('d', wave);
```
